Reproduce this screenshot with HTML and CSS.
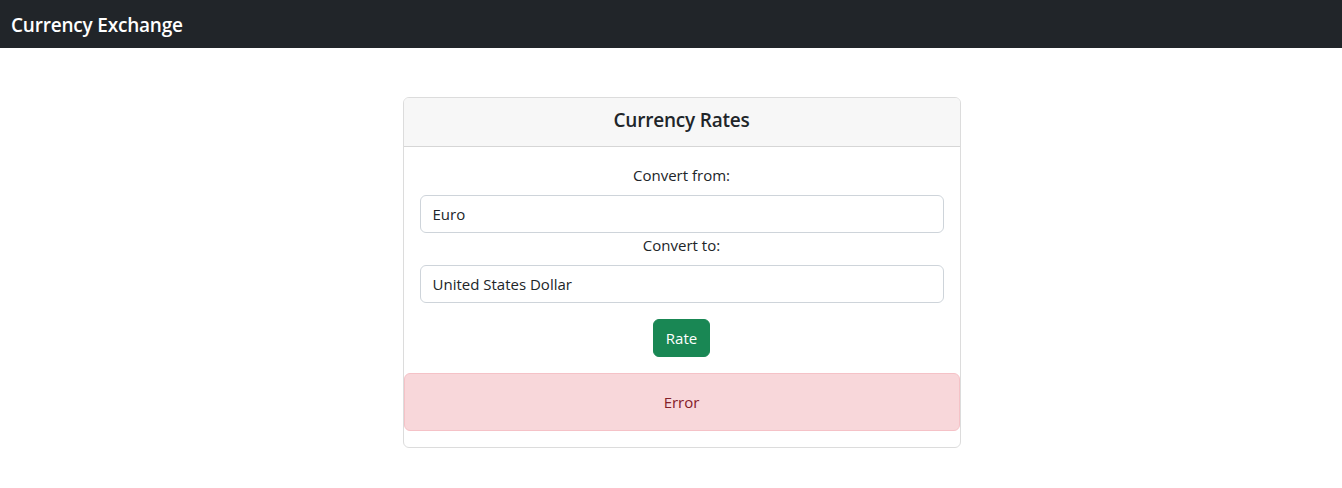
FILE: index.html
```html
<!DOCTYPE html>
<html lang="en">
<head>
<meta charset="utf-8">
<title>Currency Exchange</title>
<link rel="stylesheet" href="styles.css">
</head>
<body>
<nav class="navbar">
  <span class="brand">Currency Exchange</span>
</nav>
<main class="main">
  <section class="card">
    <header class="card-header">Currency Rates</header>
    <div class="card-body">
      <label class="label" for="from">Convert from:</label>
      <input class="input" id="from" type="text" value="Euro">
      <label class="label" for="to">Convert to:</label>
      <input class="input" id="to" type="text" value="United States Dollar">
      <div class="actions"><button class="btn" type="button">Rate</button></div>
    </div>
    <div class="alert">Error</div>
  </section>
</main>
</body>
</html>
```
FILE: styles.css
```css
* { box-sizing: border-box; }
body {
  margin: 0;
  font-family: "Open Sans", "Noto Sans", sans-serif;
  font-size: 15px;
  color: #212529;
  background: #fff;
}
.navbar {
  height: 48px;
  background: #212529;
  display: flex;
  align-items: center;
  padding: 1px 11px 0;
}
.brand {
  color: #fff;
  font-size: 19px;
  font-weight: 600;
  letter-spacing: -0.2px;
}
.main {
  display: flex;
  justify-content: center;
  padding: 49px 0 0 21px;
}
.card {
  width: 558px;
  border: 1px solid #dcdcdc;
  border-radius: 6px;
  background: #fff;
  overflow: hidden;
  padding-bottom: 16px;
}
.card-header {
  height: 49px;
  background: #f7f7f7;
  border-bottom: 1px solid #d6d6d6;
  display: flex;
  align-items: center;
  justify-content: center;
  padding-bottom: 5px;
  font-size: 19px;
  font-weight: 600;
  letter-spacing: -0.2px;
}
.card-body {
  padding: 16px 16px 16px;
  display: flex;
  flex-direction: column;
}
.label {
  text-align: center;
  line-height: 24px;
  margin-bottom: 8px;
}
.input {
  height: 38px;
  border: 1px solid #ced4da;
  border-radius: 6px;
  padding: 0 12px;
  font: inherit;
  color: #212529;
}
.actions {
  display: flex;
  justify-content: center;
  margin-top: 16px;
}
.btn {
  height: 38px;
  padding: 0 12px;
  background: #198754;
  color: #fff;
  border: 1px solid #198754;
  border-radius: 6px;
  font: inherit;
}
.alert {
  height: 58px;
  background: #f8d7da;
  border: 1px solid #f5c2c7;
  border-radius: 6px;
  color: #842029;
  display: flex;
  align-items: center;
  justify-content: center;
}
```
